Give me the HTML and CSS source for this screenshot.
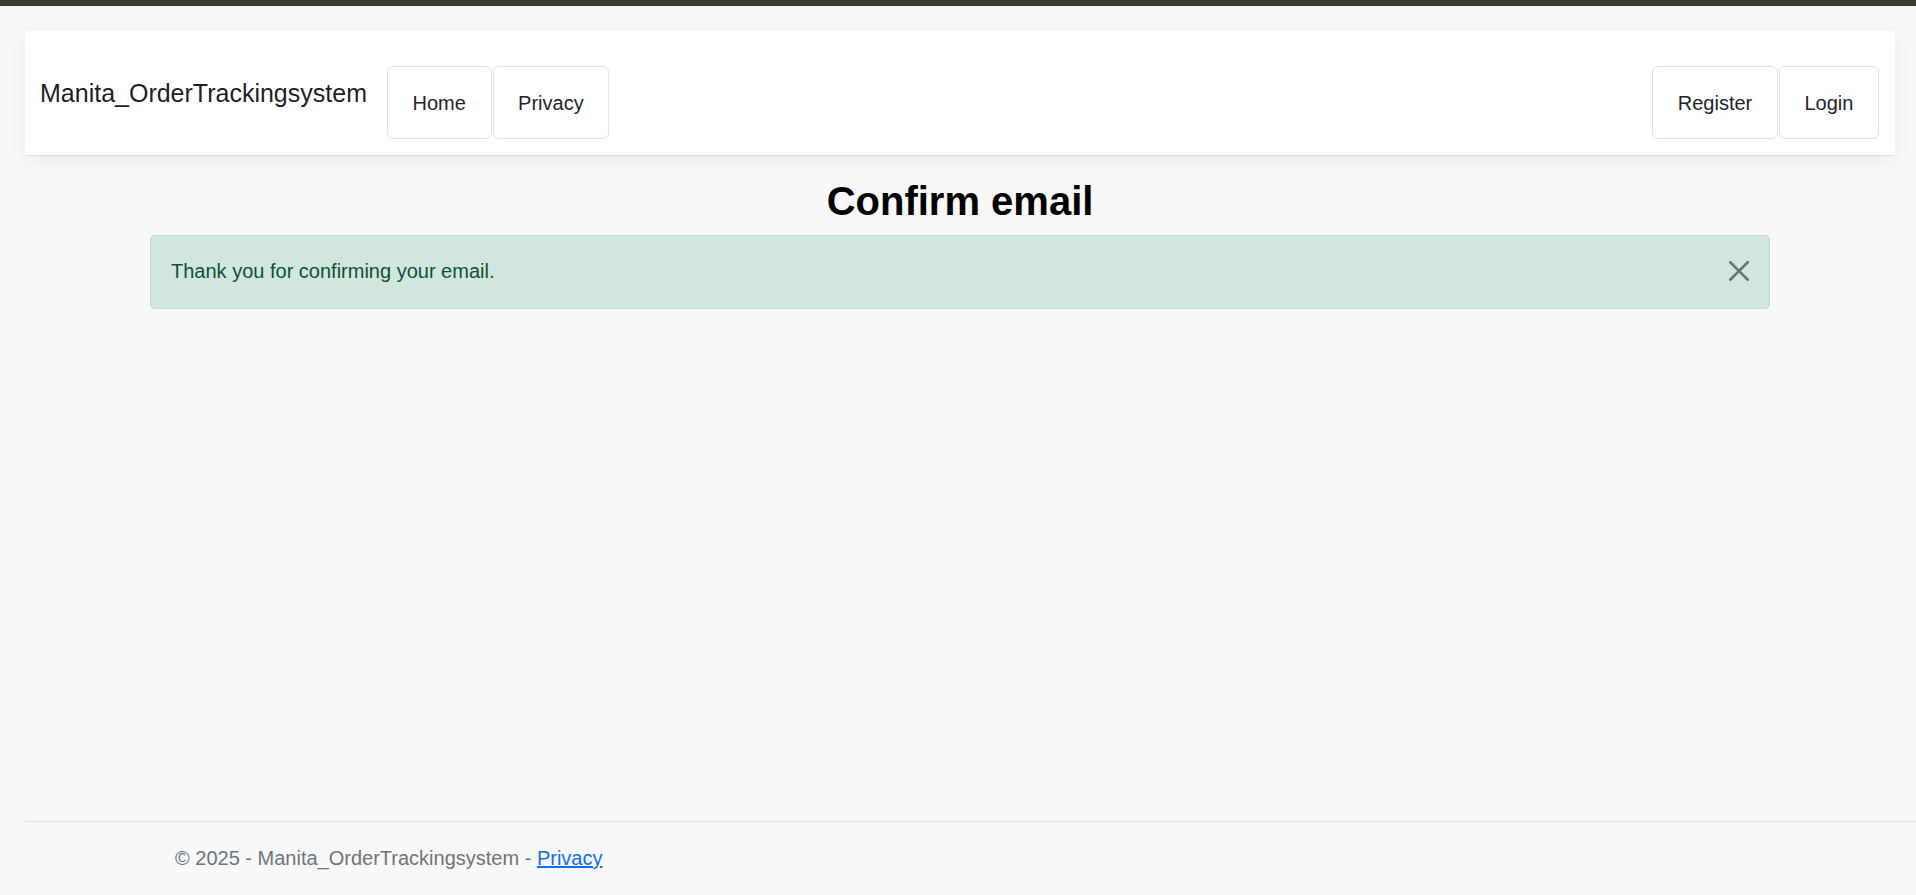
FILE: index.html
```html
<!DOCTYPE html>
<html lang="en">
<head>
<meta charset="utf-8">
<title>Confirm email - Manita_OrderTrackingsystem</title>
<link rel="stylesheet" href="styles.css">
</head>
<body>
<div class="topbar"></div>
<div class="page">
  <header class="navbar">
    <a class="brand" href="#">Manita_OrderTrackingsystem</a>
    <ul class="nav">
      <li><a class="nav-link" href="#">Home</a></li>
      <li><a class="nav-link" href="#">Privacy</a></li>
    </ul>
    <ul class="nav nav-right">
      <li><a class="nav-link" href="#">Register</a></li>
      <li><a class="nav-link" href="#">Login</a></li>
    </ul>
  </header>
  <main class="container">
    <h1 class="title">Confirm email</h1>
    <div class="alert">
      <span class="alert-text">Thank you for confirming your email.</span>
      <button class="btn-close" type="button" aria-label="Close">
        <svg viewBox="0 0 16 16" width="20" height="20"><path d="M.293.293a1 1 0 0 1 1.414 0L8 6.586 14.293.293a1 1 0 1 1 1.414 1.414L9.414 8l6.293 6.293a1 1 0 0 1-1.414 1.414L8 9.414l-6.293 6.293a1 1 0 0 1-1.414-1.414L6.586 8 .293 1.707a1 1 0 0 1 0-1.414z"/></svg>
      </button>
    </div>
  </main>
  <footer class="footer">
    <div class="footer-inner">&copy; 2025 - Manita_OrderTrackingsystem - <a href="#">Privacy</a></div>
  </footer>
</div>
</body>
</html>
```
FILE: styles.css
```css
* { box-sizing: border-box; }
html, body { margin: 0; padding: 0; }
body {
  background: #f8f8f8;
  font-family: "Liberation Sans", Arial, sans-serif;
  font-size: 20px;
  line-height: 1.5;
  color: #212529;
  min-height: 100vh;
  display: flex;
  flex-direction: column;
}
.topbar {
  height: 6px;
  background: #343f2d;
  flex: none;
}
.page {
  flex: 1;
  display: flex;
  flex-direction: column;
  padding: 25px 21px 0 25px;
}
.navbar {
  display: flex;
  align-items: flex-start;
  background: #fff;
  border-bottom: 1px solid #dee2e6;
  box-shadow: 0 5px 15px rgba(0, 0, 0, 0.05);
  padding: 35px 16px 16px 15px;
}
.brand {
  font-size: 25px;
  line-height: 37.5px;
  padding-top: 9.3px;
  color: rgba(0, 0, 0, 0.9);
  text-decoration: none;
  margin-right: 20px;
  white-space: nowrap;
}
.nav {
  list-style: none;
  margin: 0;
  padding: 0;
  display: flex;
  gap: 1px;
}
.nav-right { margin-left: auto; }
.nav-link {
  display: block;
  padding: 20.5px 24.6px;
  line-height: 30px;
  border: 1px solid #dee2e6;
  border-radius: 6px;
  color: #212529;
  text-decoration: none;
  background: #fff;
}
.container {
  width: 1620px;
  margin: 0 auto;
}
.title {
  font-size: 40px;
  font-weight: 700;
  line-height: 1.2;
  text-align: center;
  margin: 21px 0 10px;
  color: #000;
}
.alert {
  display: flex;
  align-items: center;
  justify-content: space-between;
  background: #d1e7dd;
  border: 1px solid #badbcc;
  border-radius: 5px;
  color: #0f5132;
  padding: 20px 20px 21.7px 20px;
}
.alert-text { line-height: 30px; }
.btn-close {
  border: 0;
  background: transparent;
  padding: 0;
  width: 20px;
  height: 20px;
  opacity: 0.5;
  display: flex;
  cursor: pointer;
}
.btn-close svg { fill: #000; display: block; }
.footer {
  margin-top: auto;
  margin-right: -21px;
  border-top: 1px solid #dee2e6;
  line-height: 73px;
  color: #6c757d;
  white-space: nowrap;
}
.footer-inner { padding-left: 150px; }
.footer a { color: #0d6efd; text-decoration: underline; }
```
